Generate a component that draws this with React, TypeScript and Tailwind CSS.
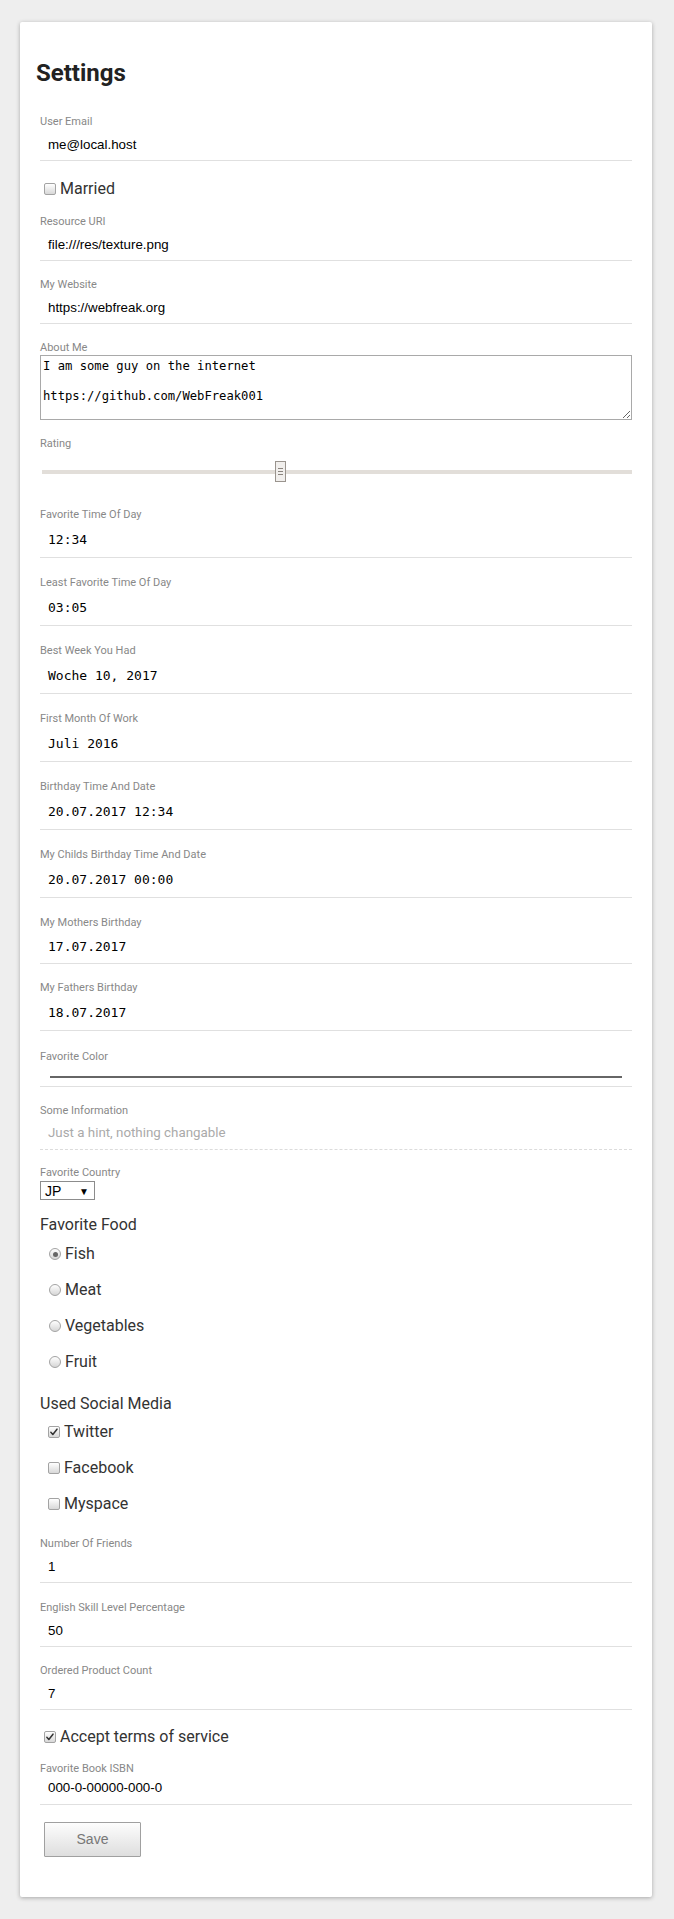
import React from 'react';

const sans = "font-['Roboto','Liberation_Sans',sans-serif]";
const inputFont = "font-['Liberation_Sans','Arial',sans-serif]";
const mono = "font-['DejaVu_Sans_Mono','Liberation_Mono',monospace]";

const Label: React.FC<{ children: React.ReactNode }> = ({ children }) => (
  <div className={`${sans} text-[11px] leading-[14px] text-[#888]`}>{children}</div>
);

const TextField: React.FC<{ label: string; value: string; className?: string }> = ({ label, value, className = '' }) => (
  <div className={className}>
    <Label>{label}</Label>
    <div className={`${inputFont} text-[13.333px] leading-[15px] text-black py-2 pl-2 border-b border-[#e0e0e0]`}>
      {value}
    </div>
  </div>
);

const DateField: React.FC<{ label: string; value: string; short?: boolean; className?: string }> = ({
  label,
  value,
  short,
  className = '',
}) => (
  <div className={className}>
    <Label>{label}</Label>
    <div
      className={`${mono} text-[13px] leading-[15px] text-black pl-2 whitespace-pre border-b border-[#e0e0e0] ${
        short ? 'py-[9px]' : 'py-[10px]'
      }`}
    >
      {value}
    </div>
  </div>
);

const Checkbox: React.FC<{ checked?: boolean }> = ({ checked }) => (
  <span className="relative flex items-center justify-center w-[12px] h-[12px] rounded-[2px] border border-[#a3a3a3] bg-gradient-to-b from-white to-[#d8d8d8] shrink-0">
    {checked && (
      <svg viewBox="0 0 12 12" className="w-[10px] h-[10px]">
        <path d="M2.2 6.4 L4.6 9 L9.6 2.6" fill="none" stroke="#333" strokeWidth="1.8" strokeLinecap="round" strokeLinejoin="round" />
      </svg>
    )}
  </span>
);

const Radio: React.FC<{ checked?: boolean }> = ({ checked }) => (
  <span className="flex items-center justify-center w-[12px] h-[12px] rounded-full border border-[#a3a3a3] bg-gradient-to-b from-white to-[#d6d6d6] shrink-0">
    {checked && <span className="w-[5px] h-[5px] rounded-full bg-[#666]" />}
  </span>
);

const CheckRow: React.FC<{ label: string; checked?: boolean; className?: string }> = ({ label, checked, className = '' }) => (
  <div className={`flex items-center gap-[4px] h-5 ${className}`}>
    <Checkbox checked={checked} />
    <span className={`${sans} text-[16px] leading-5 text-[#333]`}>{label}</span>
  </div>
);

const RadioRow: React.FC<{ label: string; checked?: boolean; className?: string }> = ({ label, checked, className = '' }) => (
  <div className={`flex items-center gap-[4px] h-5 ${className}`}>
    <Radio checked={checked} />
    <span className={`${sans} text-[16px] leading-5 text-[#333]`}>{label}</span>
  </div>
);

export default function App() {
  return (
    <div className="min-h-screen bg-[#eeeeee] pl-[20px] pr-[22px] pt-[22px] pb-[22px]">
      <div className="bg-white rounded-[2px] shadow-[0_1px_4px_rgba(0,0,0,0.3)] px-[20px] pt-[37px] pb-[40px]">
        <h1 className={`${sans} -ml-1 text-[24px] leading-[28px] font-bold text-[#222]`}>Settings</h1>

        <TextField label="User Email" value="me@local.host" className="mt-[28px]" />

        <CheckRow label="Married" className="mt-[18px] ml-[4px]" />

        <TextField label="Resource URI" value="file:///res/texture.png" className="mt-[16px]" />
        <TextField label="My Website" value="https://webfreak.org" className="mt-[17px]" />

        <div className="mt-[17px]">
          <Label>About Me</Label>
          <textarea
            readOnly
            value={'I am some guy on the internet\n\nhttps://github.com/WebFreak001'}
            className={`${mono} block w-full h-[65px] text-[12.2px] leading-[15px] text-black border border-[#a9a9a9] px-[2px] pt-[3px] resize-y outline-none`}
          />
        </div>

        <div className="mt-[17px]">
          <Label>Rating</Label>
          <div className="relative mt-[10px] h-[21px] ml-[2px]">
            <div className="absolute left-0 right-0 top-[9px] h-[4px] bg-[#e2ded9]" />
            <div className="absolute top-0 left-[39.5%] w-[11px] h-[21px] border border-[#9a948e] bg-[#f1efed] flex flex-col items-center justify-center gap-[2px]">
              <span className="block w-[5px] h-px bg-[#8a847e]" />
              <span className="block w-[5px] h-px bg-[#8a847e]" />
              <span className="block w-[5px] h-px bg-[#8a847e]" />
            </div>
          </div>
        </div>

        <DateField label="Favorite Time Of Day" value="12:34" className="mt-[26px]" />
        <DateField label="Least Favorite Time Of Day" value="03:05" className="mt-[18px]" />
        <DateField label="Best Week You Had" value="Woche 10, 2017" className="mt-[18px]" />
        <DateField label="First Month Of Work" value="Juli 2016" className="mt-[18px]" />
        <DateField label="Birthday Time And Date" value="20.07.2017 12:34" className="mt-[18px]" />
        <DateField label="My Childs Birthday Time And Date" value="20.07.2017 00:00" className="mt-[18px]" />
        <DateField label="My Mothers Birthday" value="17.07.2017" short className="mt-[18px]" />
        <DateField label="My Fathers Birthday" value="18.07.2017" className="mt-[17px]" />

        <div className="mt-[19px]">
          <Label>Favorite Color</Label>
          <div className="pt-[12px] pb-[8px] px-[10px] border-b border-[#e0e0e0]">
            <div className="h-[2px] bg-[#666]" />
          </div>
        </div>

        <div className="mt-[17px]">
          <Label>Some Information</Label>
          <div className={`${sans} text-[13.333px] leading-[15px] text-[#aaa] pl-2 pt-[7px] pb-[9px] border-b border-dashed border-[#dcdcdc]`}>
            Just a hint, nothing changable
          </div>
        </div>

        <div className="mt-[16px]">
          <Label>Favorite Country</Label>
          <div className="mt-[1px] flex items-center justify-between w-[55px] h-[19px] border border-[#8c8c8c] pl-[4px] pr-[5px]">
            <span className={`${inputFont} text-[14px] leading-[16px] text-black`}>JP</span>
            <span className="text-[10px] leading-none text-black">▼</span>
          </div>
        </div>

        <div className={`${sans} mt-[15px] text-[16px] leading-5 text-[#333]`}>Favorite Food</div>
        <div className="mt-[9px] ml-[9px] flex flex-col gap-4">
          <RadioRow label="Fish" checked />
          <RadioRow label="Meat" />
          <RadioRow label="Vegetables" />
          <RadioRow label="Fruit" />
        </div>

        <div className={`${sans} mt-[22px] text-[16px] leading-5 text-[#333]`}>Used Social Media</div>
        <div className="mt-[8px] ml-[8px] flex flex-col gap-4">
          <CheckRow label="Twitter" checked />
          <CheckRow label="Facebook" />
          <CheckRow label="Myspace" />
        </div>

        <TextField label="Number Of Friends" value="1" className="mt-[23px]" />
        <TextField label="English Skill Level Percentage" value="50" className="mt-[18px]" />
        <TextField label="Ordered Product Count" value="7" className="mt-[17px]" />

        <CheckRow label="Accept terms of service" checked className="mt-[17px] ml-[4px]" />

        <div className="mt-[15px]">
          <Label>Favorite Book ISBN</Label>
          <div className={`${inputFont} text-[13.333px] leading-[15px] text-black pt-[4px] pb-[9px] pl-2 border-b border-[#e0e0e0]`}>
            000-0-00000-000-0
          </div>
        </div>

        <button
          type="button"
          className={`${inputFont} mt-[17px] ml-[4px] block w-[97px] h-[35px] border border-[#a0a0a0] rounded-[1px] bg-gradient-to-b from-[#fdfdfd] to-[#dedede] text-[14px] text-[#777]`}
        >
          Save
        </button>
      </div>
    </div>
  );
}
